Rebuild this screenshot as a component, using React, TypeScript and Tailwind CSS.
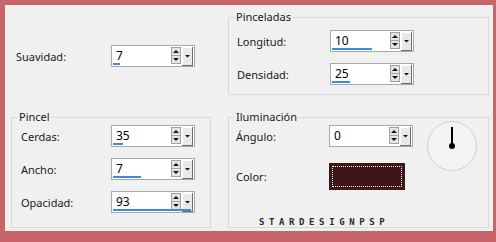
import React from "react";

function UpDown() {
  return (
    <svg width="10" height="17" viewBox="0 0 10 17" className="block">
      <rect x="0.5" y="0.5" width="9" height="16" fill="#e5e5e5" stroke="#a0a0a0" />
      <line x1="1" y1="8.5" x2="9" y2="8.5" stroke="#a0a0a0" />
      <path d="M5 3 L8 6 L2 6 Z" fill="#111" />
      <path d="M2 11 L8 11 L5 14 Z" fill="#111" />
    </svg>
  );
}

function DropBtn() {
  return (
    <svg width="11" height="19" viewBox="0 0 11 19" className="block">
      <rect x="0" y="0" width="11" height="19" fill="#e9e9e9" />
      <line x1="0.5" y1="0" x2="0.5" y2="19" stroke="#ffffff" />
      <line x1="0" y1="0.5" x2="11" y2="0.5" stroke="#ffffff" />
      <line x1="10.5" y1="0" x2="10.5" y2="19" stroke="#6e6e6e" />
      <line x1="0" y1="18.5" x2="11" y2="18.5" stroke="#6e6e6e" />
      <path d="M3 8 L8 8 L5.5 10.5 Z" fill="#111" />
    </svg>
  );
}

function SpinBox({ value, bar }: { value: string; bar: number }) {
  return (
    <div className="flex h-[22px] w-[84px] flex-col border border-[#a9a9a9] bg-white pl-[1px] pr-[1px] pt-[1px]">
      <div className="flex h-[17px] items-start">
        <div className="flex h-[17px] flex-1 items-center pl-[3px] text-[12px] leading-none text-black">
          {value}
        </div>
        <div>
          <UpDown />
        </div>
        <div className="ml-[1px]">
          <DropBtn />
        </div>
      </div>
      <div className="-mt-[1px] h-[2px] bg-[#3d8ae0]" style={{ width: bar }} />
    </div>
  );
}

function Row({
  label,
  labelW,
  children,
}: {
  label: string;
  labelW: string;
  children: React.ReactNode;
}) {
  return (
    <div className="flex items-center">
      <div className={`${labelW} text-[11px] leading-none text-[#1a1a1a]`}>{label}</div>
      {children}
    </div>
  );
}

function Group({
  title,
  className,
  children,
}: {
  title: string;
  className?: string;
  children: React.ReactNode;
}) {
  return (
    <fieldset className={`border border-[#d9d9d9] ${className ?? ""}`}>
      <legend className="ml-[6px] px-[1px] text-[11px] leading-[14px] text-[#1a1a1a]">{title}</legend>
      {children}
    </fieldset>
  );
}

function Dial() {
  return (
    <svg width="52" height="52" viewBox="0 0 52 52" className="block">
      <circle cx="26" cy="26" r="24.5" fill="#f3f3f3" stroke="#cfcfcf" />
      <line x1="26" y1="7" x2="26" y2="26" stroke="#000" strokeWidth="2" />
      <circle cx="26" cy="26" r="3" fill="#000" />
    </svg>
  );
}

export default function App() {
  return (
    <div className="h-[242px] w-[496px] bg-[#c8656b] pb-[11px] pl-[5px] pr-[3px] pt-[5px] font-['Noto_Sans',sans-serif]">
      <div className="grid h-full grid-cols-[200px_261px] grid-rows-[85px_118px] gap-x-[17px] gap-y-[15px] bg-[#f0f0f0] pl-[6px] pt-[5px]">
        {/* Suavidad */}
        <div className="pt-[35px]">
          <Row label="Suavidad:" labelW="w-[100px] pl-[5px]">
            <SpinBox value="7" bar={7} />
          </Row>
        </div>

        {/* Pinceladas */}
        <Group title="Pinceladas" className="h-[85px]">
          <div className="flex flex-col gap-[11px] pl-[8px] pt-[6px]">
            <Row label="Longitud:" labelW="w-[93px]">
              <SpinBox value="10" bar={40} />
            </Row>
            <Row label="Densidad:" labelW="w-[93px]">
              <SpinBox value="25" bar={18} />
            </Row>
          </div>
        </Group>

        {/* Pincel */}
        <Group title="Pincel" className="h-[118px]">
          <div className="flex flex-col gap-[11px] pl-[9px] pt-[1px]">
            <Row label="Cerdas:" labelW="w-[90px]">
              <SpinBox value="35" bar={10} />
            </Row>
            <Row label="Ancho:" labelW="w-[90px]">
              <SpinBox value="7" bar={28} />
            </Row>
            <Row label="Opacidad:" labelW="w-[90px]">
              <SpinBox value="93" bar={78} />
            </Row>
          </div>
        </Group>

        {/* Iluminación */}
        <Group title="Iluminación" className="flex h-[118px] flex-col">
          <div className="flex">
            <div className="flex flex-1 flex-col gap-[16px] pl-[7px] pt-[1px]">
              <Row label="Ángulo:" labelW="w-[93px]">
                <SpinBox value="0" bar={0} />
              </Row>
              <Row label="Color:" labelW="w-[93px]">
                <div className="h-[27px] w-[76px] bg-[#3e161a] p-[3px]">
                  <div className="h-full w-full border border-dotted border-white" />
                </div>
              </Row>
            </div>
            <div className="-mt-[4px] pr-[10px]">
              <Dial />
            </div>
          </div>
          <div className="mt-auto pb-[0px] pl-[30px] font-['DejaVu_Sans_Mono',monospace] text-[9px] font-bold leading-none tracking-[4.6px] text-[#2a2a2a]">
            STARDESIGNPSP
          </div>
        </Group>
      </div>
    </div>
  );
}
